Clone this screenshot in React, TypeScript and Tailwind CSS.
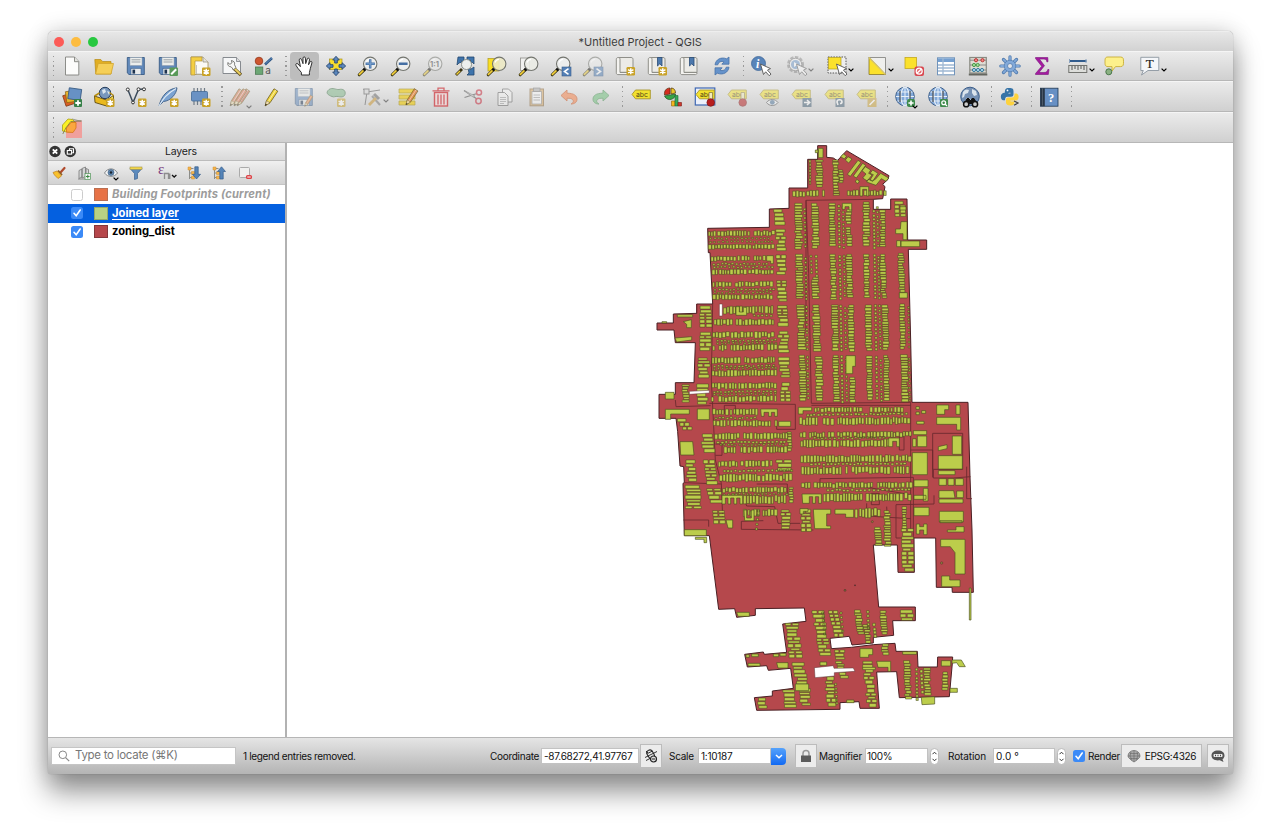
import React from "react";

type P = { children?: React.ReactNode; dim?: boolean };

const Svg = ({ children, dim }: P) => (
  <svg viewBox="0 0 20 20" className={dim ? "size-5 shrink-0 overflow-visible opacity-50" : "size-5 shrink-0 overflow-visible"} fill="none">
    {children}
  </svg>
);

/* ---------- shared icon parts ---------- */
const Star = ({ x = 12, y = 11.5 }: { x?: number; y?: number }) => (
  <g transform={`translate(${x} ${y})`}>
    <rect width="8.5" height="8.5" rx="1.2" fill="#c9a227" />
    <path d="M4.25 1.2v6M1.6 2.7l5.3 3.1M6.9 2.7L1.6 5.8" stroke="#fff" strokeWidth="1.5" />
  </g>
);
const Lens = ({ fill = "#eef0ee" }: { fill?: string }) => (
  <>
    <path d="M1.2 18.8L6.5 13.6" stroke="#3b3413" strokeWidth="3" strokeLinecap="round" />
    <path d="M1.4 18.4L5 14.8" stroke="#f2cf3a" strokeWidth="1.7" strokeLinecap="round" />
    <path d="M5.3 12.6l2 2M6 14l1.6-1.7" stroke="#111" strokeWidth="2" />
    <circle cx="12.2" cy="7.8" r="6.7" fill={fill} fillOpacity=".9" stroke="#747670" strokeWidth="1.1" />
    <path d="M8 6.5a4.7 4.7 0 014-3.2" stroke="#fff" strokeWidth="1.2" />
  </>
);
const Floppy = () => (
  <>
    <path d="M1.3 1.5h17v17H3l-1.700-1.600z" fill="#6189bb" stroke="#3a5c86" strokeWidth=".9" />
    <rect x="4" y="1.500" width="12" height="8" fill="#eceeec" stroke="#8c9aa9" strokeWidth=".5" />
    <path d="M5.500 3.800h9M5.500 6h9" stroke="#9aa0a6" strokeWidth="1" />
    <rect x="5" y="12.500" width="10" height="6" fill="#e9ebec" stroke="#3a5c86" strokeWidth=".5" />
    <rect x="6.500" y="13.600" width="2.600" height="4" fill="#1d3350" />
  </>
);
const Pencil = ({ body = "#f0d63c", x = 0 }: { body?: string; x?: number }) => (
  <g transform={`translate(${x} 0)`}>
    <path d="M4.200 18.800l1.300-5.200L13 1.800l3.800 2.400-7.800 11.600z" fill={body} stroke="#6d5c22" strokeWidth=".8" />
    <path d="M14.800 3L7.200 14.800" stroke="#fff" strokeOpacity=".55" strokeWidth="1" />
    <path d="M4.200 18.800l1.300-5.200 3.500 2.200z" fill="#f1dfb5" stroke="#6d5c22" strokeWidth=".5" />
    <path d="M4.200 18.800l.5-2 1.300.8z" fill="#111" />
  </g>
);
const Globe = ({ dark }: { dark?: boolean }) => (
  <>
    <circle cx="10" cy="9.500" r="9.300" fill={dark ? "#7590b3" : "#82a9da"} stroke="#3d5f8b" strokeWidth="1" />
    {dark ? (
      <path d="M3 5c2-3 4-3 6-2l-1 3-3 1-1 3-2 1zm9-3l4 2 1 4-3 1-2-3zM6 11l4 0 1 3-3 3z" fill="#dbe4ec" />
    ) : (
      <>
        <ellipse cx="10" cy="9.500" rx="4.200" ry="9.300" stroke="#e8f0f8" strokeWidth="1.200" />
        <path d="M10 .2v18.600M1 9.500h18M2.500 5h15M2.500 14h15" stroke="#e8f0f8" strokeWidth="1" />
        <path d="M5 4v11M15 4v11" stroke="#50555c" strokeWidth="1.300" />
      </>
    )}
  </>
);
const Tag = () => (
  <>
    <path d="M1 7.400L4.500 3h14.800v8.800H4.500z" fill="#f2e12e" stroke="#a8952b" strokeWidth=".9" />
    <text x="5" y="9.700" fontSize="6.800" fontFamily="Inter, 'Liberation Sans', sans-serif" fill="#544817">abc</text>
  </>
);
const Scroll = () => (
  <>
    <path d="M3 1.500h13c1.500 0 2 .8 2 2v12.800H3z" fill="#ecebe7" stroke="#8f8f89" strokeWidth="1" />
    <path d="M1.300 3.200c0-2.200 3.700-2.200 3.700 0v13.300h13v.5c0 1-.7 1.600-1.600 1.600H3c-1 0-1.700-.7-1.700-1.700z" fill="#f4f3f0" stroke="#8f8f89" strokeWidth="1" />
  </>
);
const Ribbon = () => <path d="M10.500 1.500h4.500V10l-2.250-2.200L10.500 10z" fill="#4d79ad" stroke="#2b4c76" strokeWidth=".8" />;
const Cursor = () => (
  <path d="M9.500 8l3 10.500 2.200-2.700 3.500 3.900 1.800-1.600-3.500-4 3-1.500z" fill="#fff" stroke="#555" strokeWidth=".9" />
);

/* ---------- project & navigation toolbar ---------- */
const NewDoc = () => <Svg><path d="M3.500 1h9l4.300 4.500V19H3.500z" fill="#fcfcfb" stroke="#81827e" strokeWidth=".9" /><path d="M12.500 1v4.700h4.300" fill="#e3e3df" stroke="#81827e" strokeWidth=".9" /></Svg>;
const Open = () => <Svg><path d="M.8 3.500h6l1.800 2H17v12.500H1.800z" fill="#e1ae22" stroke="#b68b16" strokeWidth=".7" /><path d="M1.600 18L4.200 7.500h15.300L17 18z" fill="#f5cf57" stroke="#d3a52a" strokeWidth=".8" /></Svg>;
const Save = () => <Svg><Floppy /></Svg>;
const SaveAs = () => <Svg><Floppy /><rect x="11.500" y="11.500" width="8.500" height="8.500" rx="1" fill="#5a9a5a" /><path d="M13.200 18.300l5-5" stroke="#fff" strokeWidth="2" /></Svg>;
const Layout = () => <Svg><path d="M1 1h12l5 5v12.500H1z" fill="#fbfaf5" stroke="#a08d58" strokeWidth=".8" /><path d="M1 1h11v4H5v14H1z" fill="#f4cf43" stroke="#b3923c" strokeWidth=".7" /><path d="M13 1v5h5" fill="#e4e4df" stroke="#8f8b78" strokeWidth=".7" /><path d="M6.500 9v9h5" stroke="#b6b6ae" strokeWidth=".8" /><Star /></Svg>;
const LayoutMgr = () => <Svg><path d="M1 1.500h13.500l4 4v12H1z" fill="#f6f7f8" stroke="#7b7f85" strokeWidth=".9" /><path d="M14.500 1.500v4h4" fill="#ddd" stroke="#7b7f85" strokeWidth=".8" /><path d="M11.500 12l7.500 7" stroke="#69572a" strokeWidth="3.400" /><path d="M12.500 12.500l6 5.800" stroke="#edd25e" strokeWidth="1.800" /><path d="M6 6.500c.5 1.500 1.700 2 3 1.200 1.500-.8 1.200-2.300 0-3 2.500-.2 4.300 1.700 3.500 4l1.500 3-2.500 2-2.500-3C7 11 5 9 6 6.500z" fill="#f8f8f6" stroke="#5e5e5b" strokeWidth=".8" /></Svg>;
const StyleMgr = () => <Svg><circle cx="5" cy="5" r="3.800" fill="#ce562f" stroke="#95391c" strokeWidth=".8" /><path d="M11 8.500l7-6.500" stroke="#2c5584" strokeWidth="2.600" /><path d="M11.500 7.800l6.500-6" stroke="#6490c3" strokeWidth="1" /><rect x="1.500" y="11" width="7.300" height="7.300" fill="#6da775" stroke="#4a7852" strokeWidth=".8" /><text x="11.200" y="18" fontSize="10" fontFamily="Inter" fill="#555">a</text></Svg>;
const Hand = () => <Svg><path d="M7.400 19v-2.500L3.800 12.200 2 9.300c-.8-1.500 1-2.500 2-1.300l2.400 2.700L5.200 4.200c-.3-1.700 1.900-2.200 2.400-.6L9 7.700V2.100c0-1.700 2.300-1.700 2.400 0l.3 5.500 1.500-4.600c.6-1.500 2.600-.8 2.300.8l-1 5 1.500-2.900c.8-1.300 2.400-.4 1.900 1l-1.500 5.400-1 4.300V19z" fill="#fff" stroke="#303030" strokeWidth="1" strokeLinejoin="round" /></Svg>;
const PanSel = () => <Svg><rect x="3.500" y="3" width="12.500" height="10.500" fill="#f9dd2e" stroke="#a89320" strokeWidth=".7" /><path d="M10 .3l3.300 3.700h-2v3h-2.600V4h-2zM10 19.700L6.700 16h2v-3h2.600v3h2zM.3 10L4 6.700v2h3v2.600H4v2zM19.700 10L16 13.300v-2h-3V8.700h3v-2z" fill="#5b87bd" stroke="#2b4a72" strokeWidth=".9" /></Svg>;
const ZoomIn = () => <Svg><Lens /><path d="M12.200 3.200v9.200M7.600 7.800h9.200" stroke="#456fa3" strokeWidth="2.500" /><path d="M12.200 4v7.600M8.400 7.800H16" stroke="#79a3d2" strokeWidth="1" /></Svg>;
const ZoomOut = () => <Svg><Lens /><path d="M7.800 7.800h8.800" stroke="#456fa3" strokeWidth="2.600" /></Svg>;
const ZoomNative = () => <Svg dim><Lens /><text x="7" y="10.500" fontSize="7.500" fontFamily="Inter" fontWeight="700" fill="#444">1:1</text></Svg>;
const ZoomFull = () => <Svg><path d="M3 1h6v6l-2-1-3 1-2 2zM12 1h7v7l-2-2-3 2-2-3zM13 12l3 1 3-2v8h-7l2-2z" fill="#3e74ac" stroke="#25486f" strokeWidth=".8" /><path d="M5.500 4l10.500 10M16 4L7 12" stroke="#55606b" strokeWidth="1" /><circle cx="11.500" cy="8.500" r="5" fill="#edf0ed" stroke="#8b928c" /><path d="M1 19l6-6" stroke="#3b3413" strokeWidth="2.800" /><path d="M1.500 18.500L5 15" stroke="#f2cf3a" strokeWidth="1.500" /></Svg>;
const ZoomSel = () => <Svg><rect x="1" y="2.500" width="11" height="12.500" fill="#f9df23" stroke="#b6a12a" strokeWidth=".8" /><Lens fill="#ece9c4" /></Svg>;
const ZoomLayer = () => <Svg><rect x="1.500" y="2" width="9" height="12.500" fill="#f1f1ef" stroke="#8f8f8b" strokeWidth=".8" /><Lens fill="#ebece6" /></Svg>;
const ZoomLast = ({ next }: { next?: boolean }) => <Svg dim={next}><Lens /><rect x="11" y="11" width="9" height="9" fill="#5581b6" stroke="#365d8d" strokeWidth=".6" /><path d={next ? "M13.500 12.600l4 2.900-4 2.900" : "M17.500 12.600l-4 2.900 4 2.900"} stroke="#fff" strokeWidth="1.600" /></Svg>;
const NewMap = () => <Svg><Scroll /><Star x={11.500} y={11} /></Svg>;
const NewBm = () => <Svg><Scroll /><Ribbon /><Star x={11.500} y={11} /></Svg>;
const Bm = () => <Svg><Scroll /><Ribbon /></Svg>;
const Refresh = () => <Svg><path d="M1.500 8.800C2.200 3.500 7.500.5 13.200 2.800L15.500 1v7.200H8.300l2.200-2.300C7.700 4.700 5 6 4.300 8.800z" fill="#6592ca" stroke="#4a73a8" strokeWidth=".8" transform="translate(1.500 0)" /><path d="M18.500 11.200c-.7 5.300-6 8.300-11.700 6L4.500 19v-7.200h7.200l-2.200 2.300c2.800 1.200 5.500-.1 6.200-2.900z" fill="#6592ca" stroke="#4a73a8" strokeWidth=".8" transform="translate(-1.500 0)" /></Svg>;
const Info = () => <Svg><circle cx="7.500" cy="7.500" r="7" fill="#5884b9" stroke="#426a9b" strokeWidth=".8" /><text x="5" y="12" fontSize="12" fontStyle="italic" fontWeight="700" fontFamily="Liberation Serif" fill="#fff">i</text><Cursor /></Svg>;
const Action = () => <Svg dim><circle cx="8.500" cy="8.500" r="7" stroke="#8d8d8d" strokeWidth="3" strokeDasharray="3.200 1.400" /><circle cx="8.500" cy="8.500" r="6.300" fill="#f2f2f2" stroke="#777" /><circle cx="8.500" cy="8.500" r="4.500" fill="#729bcb" /><path d="M7 6l4 2.500L7 11z" fill="#fff" /><Cursor /></Svg>;
const Select = () => <Svg><rect x="1" y="1" width="18" height="16" fill="#eee" stroke="#555" strokeWidth="1" strokeDasharray="1.500 1.200" /><rect x="1.500" y="1.500" width="12.500" height="11.500" fill="#fbe12c" stroke="#b29d1d" strokeWidth=".7" /><Cursor /></Svg>;
const SelValue = () => <Svg><path d="M2 1.500h16.500v17z" fill="#efefed" stroke="#7c7c78" strokeWidth=".8" /><path d="M2 1.500v17h16.500z" fill="#fbe12c" stroke="#86772c" strokeWidth=".8" /><path d="M2 1.500l16.500 17" stroke="#dac86b" strokeWidth="1.300" /></Svg>;
const Deselect = () => <Svg><rect x="1" y="1.500" width="11.500" height="11" fill="#fbe12c" stroke="#c4a81d" strokeWidth=".8" /><rect x="10.500" y="10.500" width="9.500" height="9.500" rx="2" fill="#d94850" /><circle cx="15.200" cy="15.200" r="3" fill="#e36c71" stroke="#fff" strokeWidth="1.200" /><path d="M13 17.300l4.400-4.300" stroke="#fff" strokeWidth="1.200" /></Svg>;
const Table = () => <Svg><rect x="1.500" y="1.800" width="17" height="17" fill="#fff" stroke="#7194bb" strokeWidth="1" /><rect x="2" y="2.300" width="16" height="3.700" fill="#75a0d1" /><path d="M7 2v17M2 9h16M2 12h16M2 15h16" stroke="#9fb8d4" strokeWidth="1.300" /></Svg>;
const Abacus = () => <Svg><rect x="1.800" y="1.500" width="16.500" height="15.500" fill="#dfddd4" stroke="#898a82" strokeWidth="1.200" /><path d="M2 4.200h16M2 9h16M2 14h16" stroke="#777" strokeWidth=".8" /><path d="M.8 18.500h18.500" stroke="#656760" strokeWidth="2.200" /><circle cx="8" cy="4.200" r="1.600" fill="#f08a88" stroke="#bb3434" /><circle cx="14.500" cy="4.200" r="1.600" fill="#f08a88" stroke="#bb3434" /><circle cx="6" cy="9" r="1.600" fill="#a5dc98" stroke="#4a9a4b" /><circle cx="9.700" cy="9" r="1.600" fill="#a5dc98" stroke="#4a9a4b" /><circle cx="6" cy="14" r="1.600" fill="#aed6ec" stroke="#377c9d" /><circle cx="10" cy="14" r="1.600" fill="#aed6ec" stroke="#377c9d" /><circle cx="14" cy="14" r="1.600" fill="#aed6ec" stroke="#377c9d" /></Svg>;
const Gear = () => <Svg><path d="M10 .8v18.400M.8 10h18.400M3.500 3.500l13 13M16.500 3.500l-13 13" stroke="#527caf" strokeWidth="3.200" strokeLinecap="round" /><path d="M10 1v18M1 10h18M3.700 3.700l12.600 12.600M16.300 3.700L3.700 16.300" stroke="#82a9d9" strokeWidth="1.800" strokeLinecap="round" /><circle cx="10" cy="10" r="5.800" fill="#82a9d9" stroke="#527caf" strokeWidth=".7" /><circle cx="10" cy="10" r="2.500" fill="#e6e7e9" stroke="#527caf" strokeWidth=".8" /></Svg>;
const Sigma = () => <Svg><path d="M3.500 1.500h12.300l.2 4.300h-1.200c-.3-2-1-2.700-3-2.700H7.500l5 6.600-5.500 6.800h5c2.300 0 3.200-.8 3.800-3h1.200l-.7 5H3.500v-1l6.200-7.200L3.500 2.500z" fill="#a51aa0" stroke="#77187a" strokeWidth=".6" /></Svg>;
const Measure = () => <Svg><path d="M1 5h17.500" stroke="#315c8d" strokeWidth="2" /><path d="M1.500 3v4M18 3v4" stroke="#8aa3c0" strokeWidth="1" /><rect x=".8" y="9.500" width="18" height="7" fill="#dddedb" stroke="#72736f" strokeWidth="1" /><path d="M4 10v4M7 10v3M10 10v4M13 10v3M16 10v4" stroke="#555" strokeWidth="1" /></Svg>;
const MapTip = () => <Svg><path d="M4 1h12.500c3 0 3 2 3 4.800s0 4.800-3 4.800h-5L8 15v-4.400H4c-3 0-3-2-3-4.800S1 1 4 1z" fill="#fdf08b" stroke="#c7ad35" strokeWidth=".9" /><circle cx="4.800" cy="15.800" r="3" fill="#8ab182" stroke="#4b774b" strokeWidth="1" /></Svg>;
const TextNote = () => <Svg><path d="M.8 1.300h18v13.200H8L1.500 19l1.800-4.500H.8z" fill="#f4f6f9" stroke="#8b959f" strokeWidth=".9" /><text x="5.700" y="12.300" fontSize="13" fontFamily="Liberation Serif" fill="#222" stroke="#222" strokeWidth=".2">T</text></Svg>;

/* ---------- editing, label and web toolbar ---------- */
const AddLayer = () => <Svg><rect x="2" y="7" width="11" height="11" transform="rotate(-18 7 12)" fill="#d85d25" stroke="#7b3510" strokeWidth=".7" /><rect x="4" y="4" width="11" height="11" transform="rotate(-8 9 9)" fill="#e9b62d" stroke="#8a6312" strokeWidth=".7" /><rect x="6.500" y="1.500" width="12.500" height="11" transform="rotate(8 12 7)" fill="#6791c4" stroke="#34577f" strokeWidth=".8" /><rect x="12" y="12" width="8" height="8" rx="1" fill="#378149" /><path d="M16 13.300v5.400M13.300 16h5.400" stroke="#fff" strokeWidth="1.800" /></Svg>;
const GeoPkg = () => <Svg><circle cx="11" cy="6" r="5.700" fill="#7897bd" stroke="#243c5b" /><path d="M8 3l3-1 1 3-3 2zM13 4l3 1-1 3z" fill="#dde7ef" /><path d="M.5 9l12 4v6L1 15.500z" fill="#eab91e" stroke="#4a3a07" strokeWidth=".8" /><path d="M12.500 13l7-4.500v6l-7 4.500z" fill="#fde14a" stroke="#4a3a07" strokeWidth=".8" /><path d="M.5 9l5-3M19.500 8.500l-4-3" stroke="#b58c10" strokeWidth="1.500" /><Star /></Svg>;
const NewShp = () => <Svg><path d="M1.800 2.500L7 15.500l5.500-13 5-.5" stroke="#3c4c5c" strokeWidth="1.500" /><circle cx="1.800" cy="2.500" r="1.500" fill="#fff" stroke="#333" /><circle cx="12.500" cy="2.300" r="1.500" fill="#fff" stroke="#333" /><circle cx="18" cy="2.300" r="1.500" fill="#fff" stroke="#333" /><circle cx="7" cy="15.500" r="1.400" fill="#fff" stroke="#333" /><Star /></Svg>;
const Feather = () => <Svg><path d="M1 19C3 10 9 2 19 .8c-.5 6-6 13-13.500 13.700z" fill="#7ba3d2" stroke="#3d5f87" strokeWidth=".9" /><path d="M1 19C5 11 10 6 18 1.500" stroke="#e0ebf5" strokeWidth="1.100" /><Star /></Svg>;
const Chip = () => <Svg><path d="M4 1v17M7.500 1v17M11 1v17M14.500 1v17" stroke="#707b86" strokeWidth="1.200" /><rect x="1.500" y="4.500" width="16" height="9.500" rx="1" fill="#6a92c4" stroke="#426994" strokeWidth=".8" /><Star /></Svg>;
const Edits = () => <Svg dim><Pencil body="#d97850" x={-4} /><Pencil body="#c9674d" x={3} /><Pencil body="#d66e49" x={0} /></Svg>;
const Toggle = () => <Svg><Pencil x={-1} /></Svg>;
const SaveEdits = () => <Svg dim><Floppy /><g transform="translate(8 7) scale(.65)"><Pencil body="#e07b39" /></g></Svg>;
const AddPoly = () => <Svg dim><path d="M3 2.500C7 0 10 3 13 2.500c4-1 7 1 6 5-1 3-5 2.500-7 2-3-.5-4 1-6 0C2 8-1 6 3 2.500z" fill="#7eb687" stroke="#45754d" /><Star x={11} /></Svg>;
const Vertex = () => <Svg dim><path d="M3 18L5 5l13-2M5 5l-4-3" stroke="#555" strokeWidth="1" /><rect x="2" y="2" width="5" height="5" fill="#d7d7d7" stroke="#555" /><path d="M10 9l8 9" stroke="#777" strokeWidth="2" /><path d="M7 18l7-7" stroke="#c9932b" strokeWidth="2.800" /><path d="M12 7l5 5" stroke="#666" strokeWidth="3" /></Svg>;
const MultiEdit = () => <Svg><g opacity=".65"><path d="M1 2h16v16H1z" fill="#efe8a7" /><path d="M1 2h16v4H1zM1 8h16v4H1zM1 14h16v4H1z" fill="#efcc14" stroke="#a58e17" strokeWidth=".7" /></g><g transform="translate(4 0) scale(.95)" opacity=".85"><Pencil body="#e38950" /></g></Svg>;
const Trash = () => <Svg><g opacity=".75"><rect x="3.500" y="5.500" width="13" height="13.500" fill="#f0dada" stroke="#cf3e44" strokeWidth="1.400" /><path d="M1.500 3.900h17M7 3.500V1.200h6v2.300M7 7.500v10M10 7.500v10M13 7.500v10" stroke="#cf3e44" strokeWidth="1.300" /></g></Svg>;
const Cut = () => <Svg dim><path d="M1 3.500l13 8.500M1.500 10.500L14 6.500" stroke="#454545" strokeWidth="1.300" /><path d="M1 3.500l11 5.500-2 1z" fill="#ccc" stroke="#555" strokeWidth=".6" /><circle cx="16" cy="5.500" r="2.500" stroke="#c52033" strokeWidth="1.500" /><circle cx="15.500" cy="14" r="2.700" stroke="#c52033" strokeWidth="1.500" /></Svg>;
const Copy = () => <Svg dim><g fill="#f4f4f3" stroke="#555" strokeWidth=".9"><path d="M7.500 2h6l3.500 3.500v9.500H7.500z" /><path d="M3 5.500h6.500L13 9v9.500H3z" /></g><path d="M5 10.500h6M5 12.500h6M5 14.500h6M5 16.500h4" stroke="#888" strokeWidth=".8" /></Svg>;
const Paste = () => <Svg dim><rect x="3" y="2" width="13.500" height="16.800" fill="#d9a963" stroke="#8b6a3c" /><rect x="5" y="4.500" width="9.500" height="12.500" fill="#fafafa" stroke="#777" strokeWidth=".7" /><rect x="6.500" y="1" width="6.500" height="3.500" fill="#aaa" stroke="#666" strokeWidth=".7" /><path d="M6.500 8h6.500M6.500 10.500h6.500M6.500 13h6.500" stroke="#888" strokeWidth=".8" /></Svg>;
const Undo = ({ redo }: { redo?: boolean }) => <Svg><g opacity=".7" transform={redo ? "translate(20 0) scale(-1 1)" : undefined}><path d="M2 8.500L8 3v3.200c7 0 10 2.500 10 6 0 3-2.500 4.800-6 4.800 2.500-1.500 3-3 1.500-4.500-1-1-2.500-1.300-5.500-1.300V14z" fill={redo ? "#8cc795" : "#f09a70"} stroke={redo ? "#6fa577" : "#cf7750"} strokeWidth=".9" /></g></Svg>;
const Label = () => <Svg><Tag /></Svg>;
const Diagram = () => <Svg><path d="M7 7V1C3 1 1 4 1.500 8z" fill="#d62d20" stroke="#503010" strokeWidth=".7" /><path d="M8 7V1c3 0 4.500 2 4.500 5z" fill="#e9c528" stroke="#503010" strokeWidth=".7" /><path d="M7 8l5.500-1c.5 5-8 8.500-11 2z" fill="#35a548" stroke="#234d24" strokeWidth=".7" /><path d="M8.500 14h3.500v5H8.500z" fill="#f4b51e" stroke="#8c650e" strokeWidth=".6" /><path d="M12 8.500h3V19h-3z" fill="#36a85b" stroke="#1d6635" strokeWidth=".6" /><path d="M15 15.500h3.500V19H15z" fill="#cc392c" stroke="#7d1b18" strokeWidth=".6" /></Svg>;
const Pin = ({ lit }: { lit?: boolean }) => <Svg dim={!lit}>{lit && <rect x=".3" y="1" width="19.500" height="17" fill="#ecf0fa" stroke="#3f68b2" strokeWidth="1.200" />}<Tag /><path d="M14 5.500h3.500v8H14z" fill="#f2ecba" stroke="#7b6f3b" strokeWidth=".7" /><circle cx="15.700" cy="15.500" r="3.800" fill="#b81d1e" stroke="#7d1515" strokeWidth=".7" /></Svg>;
const TagEye = () => <Svg dim><Tag /><path d="M7.500 15.500c3-4 8.500-4 11.500 0-3 4-8.500 4-11.500 0z" fill="#f3f5f6" stroke="#555" /><circle cx="13.300" cy="15.300" r="2.400" fill="#53799e" /></Svg>;
const TagBox = ({ d, c = "#486378" }: { d: string; c?: string }) => <Svg dim><Tag /><rect x="11.500" y="11" width="9" height="9" fill={c} /><path d={d} stroke="#fff" strokeWidth="1.600" /></Svg>;
const GlobeAdd = () => <Svg><Globe /><rect x="12" y="12" width="8" height="8" rx="2" fill="#3f8b4c" /><path d="M16 13.400v5.200M13.400 16h5.200" stroke="#fff" strokeWidth="1.600" /></Svg>;
const GlobeFind = () => <Svg><Globe /><rect x="12" y="12" width="8" height="8" rx="1" fill="#3f8b4c" /><circle cx="15.700" cy="15.700" r="1.900" stroke="#fff" strokeWidth="1.300" /><path d="M17 17l2 2" stroke="#fff" strokeWidth="1.300" /></Svg>;
const Metasearch = () => <Svg><Globe dark /><path d="M4.500 17l2.500-5.500h2l1 2h1l1-2h2l3 5.500" fill="#111" stroke="#111" /><circle cx="6.200" cy="17.200" r="2.600" fill="#ccc" stroke="#111" strokeWidth="1.500" /><circle cx="15" cy="17.200" r="2.600" fill="#ccc" stroke="#111" strokeWidth="1.500" /></Svg>;
const Python = () => <Svg><path d="M4.500 9.500c0-2 1-3 3-3h3V5.700H4.800C5 3 5 1 9 1s4.500 1 4.500 3.500v2.800c0 1.700-1 2.500-2.500 2.500H7.500c-2 0-2.500 1.300-2.500 3.500H3c-3-1-3-7 1-7.500h5" fill="#3774a7" /><path d="M14.500 6.500h2c3 1 2.800 6.500-.5 7h-5.500v1h4c0 2.700-1 4-4 4S6 17.500 6 15.500v-2.700c0-1.500 1-2.300 2.500-2.300H12c2 0 2.500-1.500 2.500-4z" fill="#fdd23d" /><circle cx="7.500" cy="3.400" r=".9" fill="#fff" /><path d="M14 14l4 2-4 2.300" stroke="#444" strokeWidth="1.200" /></Svg>;
const Help = () => <Svg><rect x="1.500" y="1.200" width="17.500" height="18" fill="#6790c4" stroke="#203752" strokeWidth=".8" /><rect x="1.500" y="1.200" width="4.300" height="18" fill="#293747" /><path d="M3.500 1.500v17" stroke="#5b6a7a" strokeWidth=".7" /><text x="9" y="14.500" fontSize="12.500" fontFamily="Liberation Serif" fontWeight="700" fill="#fff">?</text></Svg>;
const Clip = () => <Svg><rect x="4" y="2.500" width="16" height="17.500" fill="#f0a09d" /><path d="M5 7L10 1l8 2h2" stroke="#9c9c90" /><path d="M.5 13V7L6 1l4.500.5L14 5 9 14H4.500z" fill="#fbf125" stroke="#aaa11a" strokeWidth=".8" /><path d="M4.500 14v-4L9 4.500h5V10l-3 4.500z" fill="#fba73f" stroke="#db791f" strokeWidth=".9" /><path d="M.8 16l3-6 5-6.500L19 3" stroke="#77714b" strokeWidth=".8" /></Svg>;

/* ---------- toolbar structure ---------- */
const Chevron = ({ faded }: { faded?: boolean }) => (
  <svg viewBox="0 0 6 4" className={faded ? "h-1 w-1.5 opacity-40" : "h-1 w-1.5"} fill="none"><path d="M.6.6L3 3 5.400.6" stroke="#000" strokeWidth="1.200" /></svg>
);
const Tool = ({ children }: P) => <div className="flex w-[32.1px] shrink-0 items-center justify-center">{children}</div>;
const Menu = ({ children, dim }: P) => (
  <div className="flex w-10 shrink-0 items-center pl-2.5">
    {children}
    <div className="mt-2 ml-px"><Chevron faded={dim} /></div>
  </div>
);
const Corner = ({ children, dim }: P) => (
  <div className="relative flex w-[32.1px] shrink-0 items-center justify-center">
    {children}
    <div className="absolute right-1 bottom-[-2px] flex"><Chevron faded={dim} /></div>
  </div>
);
const Grip = () => (
  <div className="flex w-[7.8px] shrink-0 flex-col items-end gap-[3.400px] pr-[1.500px]">
    {[0, 1, 2, 3, 4].map((i) => <i key={i} className="size-[1.300px] bg-[#999]" />)}
  </div>
);

/* ---------- map ---------- */
type Strip = [number, number, number, number, number];

const outline =
  "M533 17H560V52L580 54 592 62 620 32 747 107 744 118 728 133 735 140 728 176 700 178V208H752V177H801L803 300H860V328H805L812 600 816 787H984L990 1010 996 1170 1000 1357H937L936 1342H889L887 1194H822L823 1297H774L772 1215H700L716 1401H826V1442H758L761 1486 700 1492V1509L636 1515 628 1489 570 1495 574 1526 634 1522 700 1514 765 1510 768 1534H832L834 1581H892L893 1551H938L937 1570 928 1670 778 1673 770 1595 710 1596 718 1705H660L657 1685 600 1688V1708L350 1711 343 1673 397 1668V1653L460 1645 452 1585 385 1591 380 1577 322 1581 314 1543 370 1536 373 1543 440 1537 428 1452 498 1444 493 1404 346 1406V1426L290 1432 284 1406 236 1408 208 1187H133L129 1030 133 1028 131 980 120 978 113 875 108 835H57V763H106V728H162L166 608H106L102 570H51V549H100V522L170 520V492H218L210 338H205L203 265 388 262V207L447 205V144H503V58H533Z";

/* rows of lots: x0, y0, x1, y1, depth */
const rows: Strip[] = [
  [205, 272, 398, 271, 17], [205, 313, 398, 312, 15], [213, 348, 380, 346, 16], [216, 388, 400, 387, 16], [218, 425, 400, 423, 17], [218, 463, 402, 462, 16],
  [250, 499, 402, 497, 24], [222, 537, 403, 537, 19], [218, 575, 405, 574, 20], [218, 614, 408, 612, 19], [216, 652, 408, 650, 19], [216, 690, 408, 688, 20],
  [216, 729, 408, 727, 19], [214, 768, 410, 766, 19], [218, 806, 356, 806, 20], [220, 840, 408, 840, 20], [224, 879, 440, 878, 20], [252, 920, 440, 918, 20],
  [235, 962, 400, 960, 20], [238, 1002, 460, 1000, 24], [248, 1041, 440, 1040, 18], [310, 1066, 440, 1064, 27], [310, 1108, 414, 1106, 22],
  [515, 801, 790, 801, 16], [478, 832, 806, 830, 24], [480, 876, 812, 874, 18], [482, 899, 745, 897, 24], [482, 946, 812, 944, 22], [484, 980, 812, 978, 24], [484, 1027, 812, 1026, 18], [550, 1060, 812, 1058, 25],
  [645, 1105, 725, 1103, 30], [458, 152, 554, 150, 19], [622, 150, 735, 150, 17],
];
const dots: Strip[] = [
  [208, 293, 395, 293, 5], [208, 303, 395, 303, 5], [218, 370, 380, 368, 6], [220, 379, 395, 378, 6], [222, 446, 398, 446, 6], [222, 456, 398, 454, 5], [340, 525, 402, 525, 6],
  [230, 600, 405, 598, 6], [230, 608, 405, 606, 5], [220, 676, 405, 674, 6], [220, 684, 405, 681, 5], [220, 753, 405, 751, 6], [220, 762, 405, 759, 5], [225, 832, 350, 831, 6],
  [230, 904, 430, 903, 7], [240, 913, 430, 911, 5], [250, 990, 455, 988, 7], [250, 1061, 440, 1059, 5], [500, 822, 800, 818, 7], [520, 892, 740, 890, 6], [510, 970, 800, 968, 7], [560, 1048, 812, 1046, 7],
];
/* columns of lots: x0, y0, x1, y1, width */
const cols: Strip[] = [
  [463, 190, 464, 328, 25], [465, 343, 468, 478, 24], [469, 495, 474, 632, 25], [475, 646, 478, 784, 23],
  [512, 190, 515, 325, 24], [513, 412, 517, 480, 24], [515, 495, 520, 632, 24], [524, 650, 527, 784, 24],
  [566, 190, 568, 322, 20], [569, 343, 571, 476, 20], [573, 495, 576, 632, 22], [577, 646, 580, 784, 20],
  [616, 208, 616, 248, 19], [617, 262, 618, 322, 19], [617, 343, 620, 476, 20], [622, 495, 625, 630, 20], [628, 712, 628, 784, 19],
  [667, 186, 668, 322, 23], [670, 343, 672, 474, 18], [674, 495, 676, 628, 21], [678, 648, 680, 780, 19],
  [718, 210, 719, 318, 18], [718, 343, 722, 474, 19], [725, 495, 728, 630, 20], [730, 646, 731, 782, 18],
  [772, 340, 778, 472, 20], [777, 492, 780, 625, 18], [781, 644, 784, 782, 23],
  [406, 268, 408, 328, 31], [408, 345, 410, 402, 30], [410, 422, 412, 482, 29], [411, 497, 414, 557, 31], [413, 574, 415, 634, 34], [415, 652, 418, 710, 33], [420, 728, 422, 784, 30],
  [396, 208, 404, 254, 33], [527, 60, 527, 140, 22], [507, 60, 507, 132, 6], [577, 60, 580, 168, 19], [593, 90, 595, 130, 17], [763, 184, 766, 234, 32],
  [178, 498, 180, 560, 36], [179, 577, 179, 636, 35], [173, 654, 173, 712, 37], [170, 732, 170, 788, 37], [180, 882, 190, 942, 38], [190, 960, 200, 1026, 34], [200, 1046, 214, 1094, 42], [218, 1112, 222, 1152, 35],
  [126, 734, 126, 788, 22], [112, 836, 130, 864, 28], [134, 960, 140, 1022, 32], [134, 1036, 136, 1102, 48], [408, 960, 412, 996, 46], [440, 876, 442, 936, 15], [446, 1042, 446, 1092, 15],
  [422, 1110, 424, 1168, 30], [482, 1108, 484, 1168, 30], [786, 1100, 786, 1170, 14], [784, 1166, 786, 1290, 36], [702, 1162, 706, 1218, 22], [730, 1112, 732, 1218, 22],
  [516, 1412, 538, 1546, 36], [566, 1412, 584, 1486, 27], [642, 1410, 652, 1484, 22], [668, 1454, 678, 1508, 20], [718, 1412, 722, 1484, 22], [780, 1410, 782, 1438, 40],
  [436, 1450, 448, 1550, 40], [456, 1568, 468, 1632, 38], [428, 1650, 434, 1700, 36], [478, 1646, 480, 1700, 34], [350, 1674, 352, 1708, 32], [552, 1610, 562, 1704, 30], [586, 1564, 604, 1616, 24],
  [666, 1564, 682, 1700, 31], [790, 1562, 794, 1680, 22], [850, 1584, 852, 1664, 22], [904, 1596, 906, 1650, 20], [722, 1512, 724, 1544, 24], [584, 1530, 586, 1556, 30],
];
const vdots: Strip[] = [
  [491, 205, 502, 784, 6], [593, 195, 604, 784, 7], [606, 200, 618, 784, 6], [698, 210, 708, 784, 7], [709, 200, 722, 784, 6], [545, 1416, 552, 1490, 6], [600, 1416, 606, 1480, 6], [680, 1412, 682, 1460, 7], [698, 1450, 702, 1486, 8], [826, 1585, 828, 1680, 7], [584, 1630, 588, 1690, 6], [840, 1590, 844, 1660, 8], [803, 500, 807, 780, 5], [510, 346, 512, 405, 6], [525, 346, 527, 405, 7], [352, 1110, 346, 1168, 6],
];
/* single footprints */
const parcels =
  "M535 25h14v28h-14zM526 30h8v8h-8zM607 190h28v20h-8v-10h-12v8h-8zM783 245h18v54h-12v-18h-22v-14h14zM770 302h12v18h-12zM783 303h56v17h-56zM380 347h20v24h-8v-8h-12zM618 647h28v32h-8v22h-20zM778 458h24v16h-24zM660 140h26v28h-6v-20h-12v20h-8zM112 524h46v7h-46zM130 545l24-6v24h-14v-10zM105 594l50-4v10l-45 6zM76 757h26v20H76zM76 808h72v14H92v16H76zM172 807h36v32h-36zM120 905h38l4 40h-40zM475 802h40v10h-26v10h-14zM362 807h50v22h-8v-12h-10v12h-8v-12h-14v12h-8zM416 844h36v15h-36zM746 894h32v26h-8v-16h-12v16h-12zM520 1108h52v14h-12v36h12v8h-48zM585 1108h56v24h-24v-10h-32zM258 1140h20v24h-14zM133 1169h66v18h-66zM166 1192h34v16h-8v-10h-26zM890 795h36v14h-12v14h-24zM948 795h12v28h-12zM890 832h72v38h-12v-17h-60zM937 888h28v55h-28zM895 920l26-6v12l-26 6zM895 947h72v40h-72zM817 938h45v66h-45zM820 872h40v12h-40zM832 888h28v32h-28zM818 896h10v24h-10zM828 800h10v8h-10zM845 812h12v8h-12zM828 816h10v8h-10zM830 844h22v8h-22zM895 992h50v12h-50zM897 1016h22v20h-22zM924 1016h18v20h-18zM946 1016h24v20h-24zM897 1052h44l4 22h-48zM950 1053h20v20h-20zM897 1077h72v12h-72zM822 1020h42v20h-42zM850 1045h14v38h-14zM822 1066h36v12h-36zM822 1102h45v25h-45zM898 1114h72v32h-72zM900 1142h66v6h-66zM829 1152h10v8h12v-8h10v32h-10v-14h-12v12h-10zM948 1160h24v16h-50v-6h26zM902 1198h73v104h-30v-64l-14-18h-29zM905 1308h24v12h31v20h-55zM290 1417h38v12h-34zM780 200h18v10h-18zM904 1562h28v16h-28zM936 1560l28 0 12 20h-18l-8-12-14 2zM930 1645h22v12h-22zM844 1672l40-2v22l-38 2zM788 1535h42v8h-42zM710 1564h42v30h-8v-12h-30zM318 1544h10v8h-10zM335 1542h20v8h-20zM400 1542h16v8h-16zM420 1540h18v8h-18zM324 1570h36v8h-36zM410 1568h34v16h-30zM466 1632h40v20h-40zM540 1566h20v10h-20zM620 1680h22v8h-22zM668 1582h38v7h-38zM660 1526h38v18h-12v8h-26zM548 1590h22v20h-22zM480 1106h24v8h-14v8h-10zM66 545h14v4H66zM988 1344h5v96h-5zM312 1110h8v24h14v-24h8v32h-28zM246 1066h62v26h-8v-18h-10v18h-8v-18h-10v18h-8v-18h-8v18h-10zM486 1062h58v28h-8v-20h-10v20h-8v-20h-10v20h-20zM288 500h10v16h12v-14h10v24h-32z";
const slanted =
  "M602 50l8-8 10 6-7 9zM616 60l8-10 12 7-10 12zM622 103l32-42 9 6-32 42zM640 108l28-38 9 6-28 38zM666 92l10-12 16 10-6 10 10 5-14 18-14-9 10-12zM690 100l8-10 16 10-16 24-8-4 10-16zM706 118l16-18 24 14-8 10-14-8-16 20-28-10 4-8 14 4zM650 118l8 5-4 8-8-5z";
const zoneLines =
  "M498 570L498 181 700 178M498 181L506 400 514 790M218 492L214 720 226 960 244 1030 248 1130M170 520V492M106 780L108 800 212 797 M208 790L466 793V868H410V840M514 790L812 787M812 787V1170M514 796H812M878 1012V880H968M968 880V988H878V930H812M880 990V1014H940L992 1010M980 980V1076H996M540 1035V1016L820 1012V1194M540 1035H640L812 1064M882 1066V1092L768 1094V1194H820M304 1168V1144L370 1142M304 1168L520 1170M133 1028L244 1032M130 1140H206V1160M350 1032H442V1066M310 1070L320 1098 404 1100 414 1150H480M253 822V796H286V822M226 912H246V946H226M778 890H792V930H778ZM694 1060H718V1094H694ZM680 1090V1128L812 1136M740 1100L742 1134";

function buildLots() {
  let s = 20817;
  const rnd = () => {
    s = (s * 16807) % 2147483647;
    return s / 2147483647;
  };
  let d = "";
  const box = (x: number, y: number, w: number, h: number) => {
    d += `M${x.toFixed(1)} ${y.toFixed(1)}h${w.toFixed(1)}v${h.toFixed(1)}h${(-w).toFixed(1)}z`;
  };
  rows.forEach(([x0, y0, x1, y1, depth]) => {
    for (let x = x0; x < x1 - 3; ) {
      const w = 5.400 + rnd() * 4.500;
      const y = y0 + ((y1 - y0) * (x - x0)) / (x1 - x0);
      const h = depth * (0.68 + rnd() * 0.32);
      if (rnd() > 0.04) box(x, y + (depth - h) * rnd(), w, h);
      x += w + 1.700 + (rnd() > 0.88 ? 3 : 0);
    }
  });
  cols.forEach(([x0, y0, x1, y1, width]) => {
    const wide = width > 26;
    for (let y = y0; y < y1 - 3; ) {
      const h = (wide ? 6 : 4.800) + rnd() * (wide ? 5 : 3.800);
      const x = x0 + ((x1 - x0) * (y - y0)) / (y1 - y0);
      const w = width * (0.66 + rnd() * 0.34);
      const start = x + (width - w) * rnd();
      if (wide && rnd() > 0.7) {
        box(x, y, width * 0.42, h);
        box(x + width * 0.52, y, width * 0.48, h);
      } else {
        box(start, y, w, h);
      }
      y += h + (wide ? 2.600 : 1.700);
    }
  });
  dots.forEach(([x0, y0, x1, y1, size]) => {
    for (let x = x0; x < x1; x += 9 + rnd() * 5) box(x, y0 + ((y1 - y0) * (x - x0)) / (x1 - x0) + rnd() * 3 - 1.500, size + rnd() * 2, size * 0.85);
  });
  vdots.forEach(([x0, y0, x1, y1, size]) => {
    for (let y = y0; y < y1; y += 9 + rnd() * 6) {
      const street = [[328, 343], [480, 494], [633, 646]].some(([a, b]) => y > a - 5 && y < b && y1 > 700 && y1 < 800);
      if (!street) box(x0 + ((x1 - x0) * (y - y0)) / (y1 - y0), y, size, size);
    }
  });
  return d;
}
const lots = buildLots();

const MapCanvas = () => (
  <svg viewBox="-1059 9 2835 1782" className="h-[594px] w-[945px] shrink-0">
    <path d={outline} fill="#b5484c" stroke="#4a2024" strokeWidth="3" />
    <path d={zoneLines} fill="none" stroke="#6b2a2e" strokeWidth="2.600" />
    <path d={lots} fill="#bccd4b" stroke="#3c421b" strokeWidth="1.450" />
    <path d={parcels + slanted} fill="#bccd4b" stroke="#4c521f" strokeWidth="2" />
    <path d="M238 492h9v36h-9zM148 754l60-3v8l-60 4zM523 1583l57-6 2 8 58-1 5 10-62 4v10l-58 5z" fill="#fff" stroke="#5b3033" strokeWidth="1.500" />
    <circle cx="645" cy="1336" r="2.500" fill="#482829" />
    <circle cx="615" cy="1351" r="3" fill="#7a6f35" stroke="#482829" strokeWidth="1.500" />
    <circle cx="905" cy="1269" r="3.500" fill="#98873f" stroke="#482829" strokeWidth="1.500" />
    <circle cx="697" cy="1145" r="3" fill="#98873f" stroke="#482829" strokeWidth="1.500" />
  </svg>
);

/* ---------- layers panel ---------- */
const Small = ({ children }: P) => <svg viewBox="0 0 14 14" className="size-3.5 shrink-0 overflow-visible" fill="none">{children}</svg>;
const Check = ({ on }: { on?: boolean }) => (
  <span className={on ? "flex size-3 items-center justify-center rounded-[2.500px] bg-[#3b8af7]" : "size-3 rounded-[2.500px] border border-[#ccc] bg-white"}>
    {on && <svg viewBox="0 0 12 12" className="size-3" fill="none"><path d="M3 6.300l2.200 2.500L9.200 3" stroke="#fff" strokeWidth="1.600" strokeLinecap="round" /></svg>}
  </span>
);
const TreeIcon = ({ up }: { up?: boolean }) => (
  <Small><path d="M2.500 1v12M2.500 2.500h4M2.500 7h4M2.500 11.500h4" stroke="#8c8c88" /><path d="M1 1h3v3H1zM4.500 5.500h3v3h-3zM4.500 10h3v3h-3z" fill="#f4b44b" stroke="#d39235" strokeWidth=".5" /><path d={up ? "M9.500.8l4 4.700h-2.300V13H7.800V5.500H5.500z" : "M9.500 13l4-4.700h-2.300V.8H7.800v7.500H5.500z"} fill="#5584b8" stroke="#355c89" strokeWidth=".7" /></Small>
);
const LayersPanel = () => (
  <aside className="flex w-[239px] shrink-0 flex-col border-r-2 border-[#b2b2b2] bg-white">
    <div className="flex h-[18px] items-center border-b border-[#bcbcbc] bg-gradient-to-b from-[#efefef] to-[#d9d9d9] pl-px">
      <svg viewBox="0 0 28 13" className="h-[13px] w-7" fill="none"><circle cx="6" cy="6.500" r="5.700" fill="#343434" /><path d="M3.800 4.300l4.400 4.400M8.200 4.300L3.800 8.700" stroke="#fff" strokeWidth="1.900" /><circle cx="21.300" cy="6.500" r="5.700" fill="#343434" /><path d="M20.500 5V3.700h4v4h-1.300" stroke="#fff" strokeWidth="1.100" /><rect x="18.300" y="5.500" width="4.300" height="3.600" stroke="#fff" strokeWidth="1.100" /></svg>
      <div className="flex-1 text-center text-[10.500px] tracking-[-0.2px] text-[#222]">Layers</div>
    </div>
    <div className="flex h-[24px] items-center border-b border-[#c4c4c4] bg-gradient-to-b from-[#f0f0f0] to-[#d2d2d2]">
      <div className="flex w-[22px] justify-center"><Small><path d="M12.500 2L8.500 6.500" stroke="#b04a2c" strokeWidth="2.200" strokeLinecap="round" /><path d="M6 4.500l4 4.500" stroke="#8f5d22" strokeWidth="1.800" /><path d="M1 6.500L5 5l4.500 5L6 12.500 2.500 9z" fill="#f8c12c" stroke="#c07f20" strokeWidth=".7" /></Small></div>
      <div className="flex w-[28px] justify-center"><Small><path d="M2 4.500L5 3v8l-3 1.500zM5 2.500L8.500 1v9.500L5 12zM9 2.500l2.500 1V9H9z" fill="#d5d7d8" stroke="#777" strokeWidth=".8" /><path d="M1 13h7" stroke="#888" /><rect x="8" y="7.500" width="5.500" height="6" fill="#f5f5f5" stroke="#4f9556" strokeWidth=".7" /><path d="M10.800 8.700v3.600M9 10.500h3.600" stroke="#388840" /></Small></div>
      <div className="relative flex w-[25px] justify-center"><Small><path d="M.5 7C3.500 1.500 10.500 1.500 13.500 7c-3 4.500-10 4.500-13 0z" fill="#f4f5f6" stroke="#86898c" /><circle cx="7" cy="6.500" r="3" fill="#6086ae" stroke="#456585" strokeWidth=".7" /><circle cx="7" cy="6.500" r="1.200" fill="#1c2630" /></Small><div className="absolute right-1 bottom-[-1px] flex"><Chevron /></div></div>
      <div className="flex w-[25px] justify-center"><Small><path d="M1 2.500h12L8.500 7.500V12.500L5.500 13.500V7.500z" fill="#5c8abd" stroke="#3c618e" strokeWidth=".7" /><rect x="1" y="1" width="12" height="2.300" fill="#f2d64a" stroke="#a3954b" strokeWidth=".6" /></Small></div>
      <div className="flex w-[34px] items-center pl-[10px]"><svg viewBox="0 0 20 14" className="h-3.5 w-5 shrink-0 overflow-visible" fill="none"><text x="0" y="8" fontSize="15" fontFamily="Liberation Serif" fill="#7a3d80">ε</text><path d="M6.500 13V7.500h4v5.500M11.800 13V7.500" stroke="#8d8d8d" strokeWidth="1.300" /><path d="M14 9l2.200 2 2.200-2" stroke="#111" strokeWidth="1.300" /></svg></div>
      <div className="flex w-6 justify-center"><TreeIcon /></div>
      <div className="flex w-[26px] justify-center"><TreeIcon up /></div>
      <div className="flex w-[25px] justify-center"><Small><rect x="1.500" y="1.500" width="10" height="10" rx="1" fill="#efefee" stroke="#aaa" /><rect x="8" y="9" width="6" height="4" rx="1.500" fill="#dd4347" /><path d="M9.300 11h3.400" stroke="#fff" /></Small></div>
    </div>
    <div className="flex flex-col text-[11.200px] font-bold">
      <div className="flex h-[19px] items-center pl-[23px]"><Check /><span className="ml-[11px] h-[13px] w-3.5 border border-[#b96e51] bg-[#e77246]" /><span className="ml-1 tracking-[0.15px] whitespace-nowrap text-[#9c9c9c] italic">Building Footprints (current)</span></div>
      <div className="flex h-[18.500px] items-center bg-[#0460e0] pl-[23px] text-white"><Check on /><span className="ml-[11px] h-[13px] w-3.5 border border-[#94a968] bg-[#b8d184]" /><span className="ml-1 underline underline-offset-2">Joined layer</span></div>
      <div className="flex h-[18.500px] items-center pl-[23px]"><Check on /><span className="ml-[11px] h-[13px] w-3.5 border border-[#84383b] bg-[#b6474b]" /><span className="ml-1">zoning_dist</span></div>
    </div>
  </aside>
);

/* ---------- status bar ---------- */
const Stepper = () => (
  <span className="ml-0.5 flex h-[17px] w-[9px] shrink-0 items-center justify-center rounded-full border border-[#bbb] bg-white">
    <svg viewBox="0 0 7 13" className="h-[13px] w-[7px] shrink-0" fill="none"><path d="M1.500 4.200l2-2 2 2M1.500 8.800l2 2 2-2" stroke="#333" strokeWidth="1" /></svg>
  </span>
);
const field = "flex h-4 shrink-0 items-center border border-[#c2c2c2] bg-white pl-0.5";
const btn = "flex h-6 shrink-0 items-center justify-center border border-[#bcbcbc] bg-[#ececec]";

const StatusBar = () => (
  <footer className="flex h-[37px] shrink-0 items-center border-t border-[#b6b6b6] bg-gradient-to-b from-[#e5e5e5] to-[#b4b4b4] pl-[3px] text-[10px] tracking-[-0.28px] whitespace-nowrap text-[#111]">
    <div className="flex h-[18px] w-[185px] shrink-0 items-center border border-[#c5c5c5] bg-white pl-1.5 text-[11.500px] text-[#777]">
      <svg viewBox="0 0 12 12" className="mr-[5px] size-3" fill="none"><circle cx="4.800" cy="4.800" r="3.800" stroke="#888" /><path d="M7.600 7.600l3.600 3.600" stroke="#888" strokeWidth="1.200" /></svg>
      <span>Type to locate (⌘K)</span>
    </div>
    <span className="ml-[7px] w-[247px] tracking-[-0.36px]">1 legend entries removed.</span>
    <span className="w-[51px]">Coordinate</span>
    <span className={field + " w-[98px]"}>-87.68272,41.97767</span>
    <span className={btn + " ml-px w-[22px]"}><svg viewBox="0 0 16 16" className="size-4" fill="none"><rect x="4.500" y="1.500" width="6" height="9" rx="3" transform="rotate(-30 8 6)" fill="#e8e8e8" stroke="#222" strokeWidth="1.100" /><path d="M4.500 5.500l5-2.500M2 9.500L14 3.500M3 12.500l4-2M3 3l2 2" stroke="#222" strokeWidth=".9" /><circle cx="10.500" cy="11" r="3" fill="#ddd" stroke="#222" strokeWidth="1.200" /><path d="M9 11h3" stroke="#222" /></svg></span>
    <span className="ml-[7px] w-[29px]">Scale</span>
    <span className={field + " w-[73px]"}>1:10187</span>
    <span className="flex h-[17px] w-[15px] shrink-0 items-center justify-center rounded-r-sm bg-gradient-to-b from-[#55a2fb] to-[#1069f2]"><svg viewBox="0 0 8 5" className="h-[5px] w-2" fill="none"><path d="M1 1l3 2.700L7 1" stroke="#fff" strokeWidth="1.500" /></svg></span>
    <span className={btn + " ml-[9px] w-[22px]"}><svg viewBox="0 0 14 16" className="h-4 w-3.5" fill="none"><path d="M4 8V5.500c0-4 6-4 6 0V8" stroke="#999" strokeWidth="1.500" /><rect x="2" y="7.500" width="10" height="6.500" fill="#5c5c5c" /></svg></span>
    <span className="ml-[2px] w-[46px] tracking-[-0.2px]">Magnifier</span>
    <span className={field + " w-[63px] pl-px"}>100%</span>
    <Stepper />
    <span className="ml-[9px] w-[45px] tracking-[-0.1px]">Rotation</span>
    <span className={field + " w-[62px] tracking-[0.1px]"}>0.0 °</span>
    <Stepper />
    <span className="ml-[7px] flex"><Check on /></span>
    <span className="ml-[3px] w-[33px]">Render</span>
    <span className={btn + " w-[81px] gap-1"}><svg viewBox="0 0 14 14" className="size-3.5" fill="none"><path d="M1 7a6 5.500 0 0112 0c0 2-2 2.500-3 4l-3 2-3-2C3 9.500 1 9 1 7z" fill="#aaa" stroke="#666" strokeWidth=".7" /><path d="M1 7h12M3 4.500h8M3 9.500h8M7 1.500v11M4 3l-1 4 2 4M10 3l1 4-2 4" stroke="#666" strokeWidth=".6" /></svg>EPSG:4326</span>
    <span className={btn + " ml-[5px] w-[22px]"}><svg viewBox="0 0 14 14" className="size-3.5" fill="none"><path d="M7 1.500c4 0 6.500 2 6.500 5 0 2-1 3-2 3.800l1 2.700-3.700-1.700C4 12 .5 10 .5 6.500c0-3 2.500-5 6.500-5z" fill="#555" /><rect x="2.500" y="5" width="9" height="3" rx="1" fill="#eee" /><path d="M4 6.500h1M6.500 6.500h1M9 6.500h1" stroke="#444" strokeWidth="1.300" /></svg></span>
  </footer>
);

const bar = "flex shrink-0 items-center border-t border-t-[#f5f5f5] border-b border-b-[#b7b7b7] bg-gradient-to-b from-[#ebebeb] to-[#d0d0d0]";

export default function App() {
  return (
    <div className="h-[837px] w-[1280px] overflow-hidden bg-white pt-[31px] pl-[48px] font-['Inter','Liberation_Sans',sans-serif]">
      <div className="flex h-[743px] w-[1184.500px] flex-col overflow-hidden rounded-t-[5px] rounded-b-[3px] bg-[#ccc] shadow-[0_18px_28px_rgba(0,0,0,0.42),0_0_22px_rgba(0,0,0,0.16),0_0_1px_rgba(0,0,0,0.4)]">
        <header className="flex h-5 shrink-0 items-center border-t border-[#eee] bg-gradient-to-b from-[#e7e7e7] to-[#d2d2d2] pl-1.5">
          <div className="flex w-[45px] gap-[7px]">
            <i className="size-2.5 rounded-full bg-[#fc5b57]" />
            <i className="size-2.5 rounded-full bg-[#fdbc40]" />
            <i className="size-2.5 rounded-full bg-[#28c840]" />
          </div>
          <h1 className="flex-1 pt-px pr-[51px] text-center text-[11px] text-[#3c3c3c]">*Untitled Project - QGIS</h1>
        </header>

        <div className={bar + " h-[30px]"}>
          <Grip />
          <Tool><NewDoc /></Tool><Tool><Open /></Tool><Tool><Save /></Tool><Tool><SaveAs /></Tool><Tool><Layout /></Tool><Tool><LayoutMgr /></Tool><Tool><StyleMgr /></Tool>
          <Grip />
          <div className="flex w-[32.1px] shrink-0 justify-center"><div className="flex h-7 w-[29px] items-center justify-center rounded-sm bg-[#bdbdbd]"><Hand /></div></div>
          <Tool><PanSel /></Tool><Tool><ZoomIn /></Tool><Tool><ZoomOut /></Tool><Tool><ZoomNative /></Tool><Tool><ZoomFull /></Tool><Tool><ZoomSel /></Tool><Tool><ZoomLayer /></Tool><Tool><ZoomLast /></Tool><Tool><ZoomLast next /></Tool><Tool><NewMap /></Tool><Tool><NewBm /></Tool><Tool><Bm /></Tool><Tool><Refresh /></Tool>
          <Grip />
          <Tool><Info /></Tool><Menu dim><Action /></Menu><Menu><Select /></Menu><Menu><SelValue /></Menu><Tool><Deselect /></Tool><Tool><Table /></Tool><Tool><Abacus /></Tool><Tool><Gear /></Tool><Tool><Sigma /></Tool><Menu><Measure /></Menu><Tool><MapTip /></Tool><Menu><TextNote /></Menu>
        </div>

        <div className={bar + " h-[31px]"}>
          <Grip />
          <Tool><AddLayer /></Tool><Tool><GeoPkg /></Tool><Tool><NewShp /></Tool><Tool><Feather /></Tool><Tool><Chip /></Tool>
          <Grip />
          <Corner dim><Edits /></Corner><Tool><Toggle /></Tool><Tool><SaveEdits /></Tool><Tool><AddPoly /></Tool><Menu dim><Vertex /></Menu><Tool><MultiEdit /></Tool><Tool><Trash /></Tool><Tool><Cut /></Tool><Tool><Copy /></Tool><Tool><Paste /></Tool><Tool><Undo /></Tool><Tool><Undo redo /></Tool>
          <Grip />
          <Tool><Label /></Tool><Tool><Diagram /></Tool><Tool><Pin lit /></Tool><Tool><Pin /></Tool><Tool><TagEye /></Tool><Tool><TagBox d="M13 15.500h5.500M16 13l2.700 2.500L16 18" /></Tool><Tool><TagBox d="M14 18l-1-3c0-3 5-3 5 0 0 1-1 1.500-2 1.500" /></Tool><Tool><TagBox c="#cca43a" d="M13.500 18l5-5" /></Tool>
          <Grip />
          <Corner><GlobeAdd /></Corner><Tool><GlobeFind /></Tool><Tool><Metasearch /></Tool>
          <Grip />
          <Tool><Python /></Tool>
          <Grip />
          <Tool><Help /></Tool>
          <Grip />
        </div>

        <div className={bar + " h-[31px]"}>
          <Grip />
          <Tool><Clip /></Tool>
        </div>

        <main className="flex h-[594px] shrink-0 overflow-hidden bg-white">
          <LayersPanel />
          <MapCanvas />
        </main>

        <StatusBar />
      </div>
    </div>
  );
}
